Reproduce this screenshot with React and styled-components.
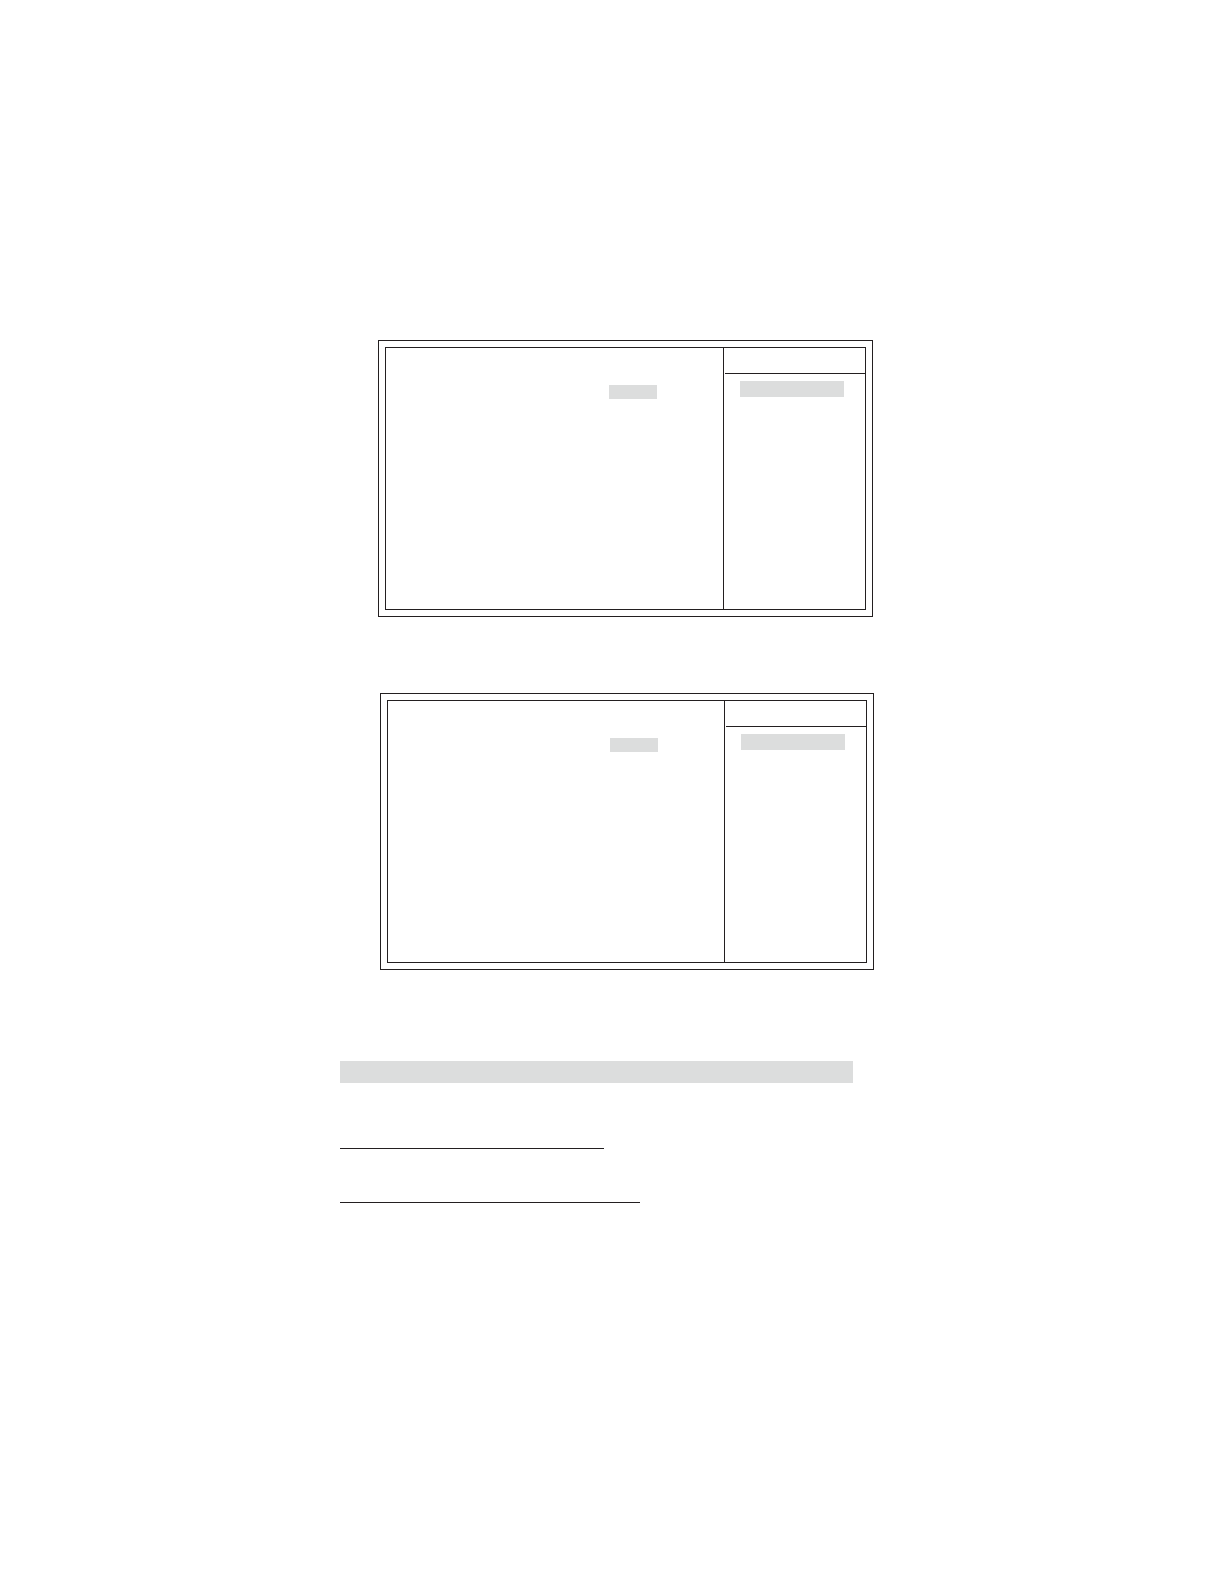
import styled, { createGlobalStyle } from 'styled-components'

const screens = [
  { id: 'first', left: 38, right: 11 },
  { id: 'second', left: 40, right: 10 },
]

const App = () => {
  return (
    <>
      <GlobalStyle />
      <Page>
        <ScreenList>
          {screens.map(({ id, left, right }) => (
            <SetupScreen key={id} left={left} right={right} />
          ))}
        </ScreenList>
        <Banner />
        <Notes>
          <Rule $width={264} />
          <Rule $width={300} />
        </Notes>
      </Page>
    </>
  )
}

const SetupScreen = ({ left, right }) => (
  <ScreenFrame $left={left} $right={right}>
    <ScreenBody>
      <OptionsPanel>
        <Highlight $width={48} $height={14} />
      </OptionsPanel>
      <HelpPanel>
        <HelpHeader />
        <HelpContent>
          <Highlight $width={104} $height={16} />
        </HelpContent>
      </HelpPanel>
    </ScreenBody>
  </ScreenFrame>
)

export default App

const GlobalStyle = createGlobalStyle`
  * {
    box-sizing: border-box;
  }

  body {
    margin: 0;
    background: #ffffff;
    font-family: "Liberation Sans", Arial, sans-serif;
  }
`

const Page = styled.main`
  max-width: 544px;
  margin: 0 auto;
  padding: 340px 0;
`

const ScreenList = styled.div`
  display: flex;
  flex-direction: column;
  gap: 76px;
`

const ScreenFrame = styled.section`
  margin-left: ${({ $left }) => $left}px;
  margin-right: ${({ $right }) => $right}px;
  padding: 6px;
  border: 1px solid #231f20;
`

const ScreenBody = styled.div`
  display: grid;
  grid-template-columns: 1fr 142px;
  min-height: 263px;
  border: 1px solid #231f20;
`

const OptionsPanel = styled.div`
  display: flex;
  justify-content: flex-end;
  align-items: flex-start;
  padding: 37px 66px 0 0;
`

const HelpPanel = styled.aside`
  border-left: 1px solid #231f20;
`

const HelpHeader = styled.div`
  height: 26px;
  margin-left: 1px;
  border-bottom: 1px solid #231f20;
`

const HelpContent = styled.div`
  padding: 7px 16px;
`

const Highlight = styled.div`
  width: ${({ $width }) => $width}px;
  height: ${({ $height }) => $height}px;
  background: #dcdddd;
`

const Banner = styled.div`
  height: 22px;
  margin: 91px 31px 0 0;
  background: #dcdddd;
`

const Notes = styled.div`
  display: flex;
  flex-direction: column;
  gap: 53px;
  margin-top: 65px;
`

const Rule = styled.hr`
  width: ${({ $width }) => $width}px;
  height: 1px;
  margin: 0;
  border: 0;
  background: #231f20;
`
